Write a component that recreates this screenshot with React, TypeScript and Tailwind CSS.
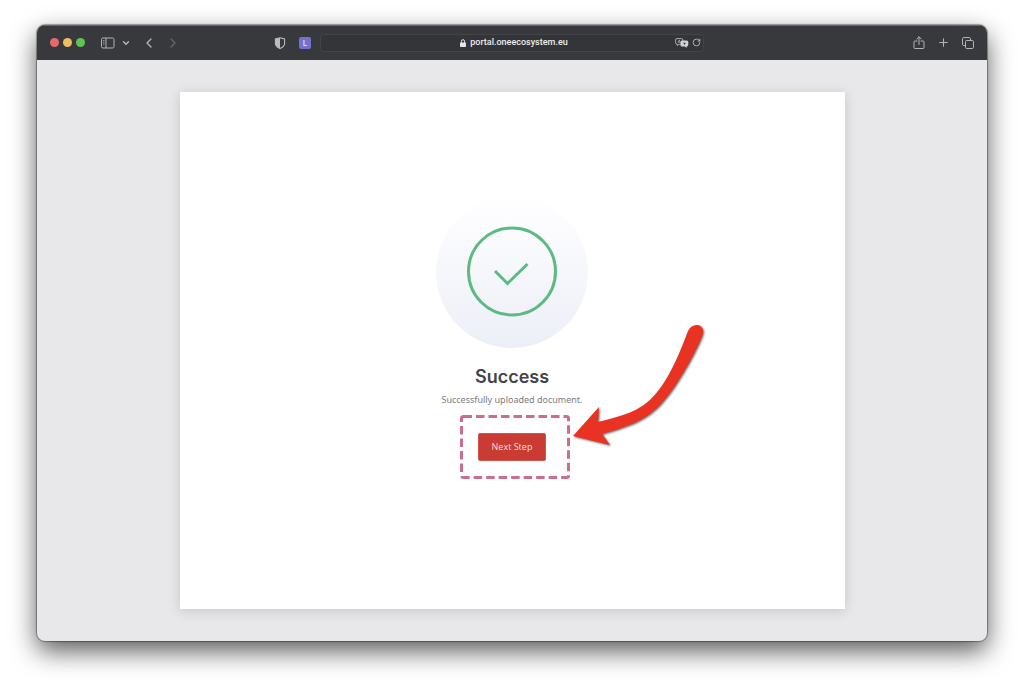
import { ChevronDown, ChevronLeft, ChevronRight, Plus, RotateCw } from "lucide-react";

const iconButton = "flex items-center justify-center text-[#b4b4b7]";

function SidebarIcon() {
  return (
    <svg viewBox="0 0 14 12" className="h-3 w-3.5" fill="none" stroke="currentColor">
      <rect x="0.5" y="1" width="12.5" height="10" rx="1.5" />
      <path d="M5 1v10" />
      <path d="M2 3.5h1.5M2 5.3h1.5M2 7.1h1.5" strokeWidth="0.8" />
    </svg>
  );
}

function ShieldIcon() {
  return (
    <svg viewBox="0 0 12 12" className="size-3">
      <path d="M6 .7 10.6 2v4.2c0 2.4-2 4.2-4.6 5.2C3.4 10.4 1.4 8.6 1.4 6.2V2Z" fill="#38393c" stroke="#bcbcbe" strokeWidth="1.1" />
      <path d="M6 .7 1.4 2v4.2c0 2.4 2 4.2 4.6 5.2Z" fill="#bcbcbe" />
    </svg>
  );
}

function LockIcon() {
  return (
    <svg viewBox="0 0 6 8" className="h-2 w-1.5">
      <path d="M1.4 4V2.3a1.6 1.6 0 0 1 3.2 0V4" fill="none" stroke="#e6e6e7" />
      <rect y="3.5" width="6" height="4.5" rx="0.8" fill="#e6e6e7" />
    </svg>
  );
}

function TranslateIcon() {
  return (
    <svg viewBox="0 0 14 10" className="h-2.5 w-3.5">
      <path
        d="M2 .6h4.5a1.4 1.4 0 0 1 1.4 1.4v2.8a1.4 1.4 0 0 1-1.4 1.4H4L2.3 7.7V6.200H2A1.4 1.4 0 0 1 .6 4.8V2A1.4 1.4 0 0 1 2 .6Z"
        fill="none"
        stroke="#b4b4b7"
        strokeWidth="0.9"
      />
      <path d="M3 4.8 4.2 2l1.2 2.8M3.4 4h1.6" fill="none" stroke="#b4b4b7" strokeWidth="0.7" />
      <path d="M7 2.6h4.6A1.7 1.7 0 0 1 13.3 4.3v2.4a1.7 1.7 0 0 1-1.7 1.7v1.5L9.9 8.400H7a1.5 1.5 0 0 1-1.5-1.5V4.3A1.7 1.7 0 0 1 7 2.6Z" fill="#d2d2d4" />
      <path d="M8.2 4.7h2.6l-1.3 2.4Z" fill="#38393c" />
    </svg>
  );
}

function ShareIcon() {
  return (
    <svg viewBox="0 0 12 14" className="h-3.5 w-3" fill="none" stroke="currentColor" strokeLinecap="round" strokeLinejoin="round">
      <path d="M4 5H2a1 1 0 0 0-1 1v5.500a1 1 0 0 0 1 1h8a1 1 0 0 0 1-1V6a1 1 0 0 0-1-1H8" />
      <path d="M6 8.500V1M3.800 3 6 .8 8.200 3" />
    </svg>
  );
}

function TabsIcon() {
  return (
    <svg viewBox="0 0 12 12" className="size-3" fill="none" stroke="currentColor">
      <path d="M3.5 8.500H1.7a1.2 1.2 0 0 1-1.2-1.2V1.7A1.2 1.2 0 0 1 1.7.5h5.600a1.2 1.2 0 0 1 1.2 1.2v1.8" />
      <rect x="3.5" y="3.5" width="8" height="8" rx="1.2" />
    </svg>
  );
}

function Toolbar() {
  return (
    <header className="flex h-[35px] items-center bg-[#38393c] px-[13px] shadow-[inset_0_1px_0_#65686a]">
      <div className="flex flex-1 items-center">
        <div className="flex gap-1">
          <button aria-label="Close" className="size-[9px] rounded-full bg-[#e8696b]" />
          <button aria-label="Minimize" className="size-[9px] rounded-full bg-[#f0bd5c]" />
          <button aria-label="Full screen" className="size-[9px] rounded-full bg-[#5fc454]" />
        </div>
        <button aria-label="Sidebar" className={`${iconButton} ml-4`}>
          <SidebarIcon />
        </button>
        <button aria-label="Tab groups" className={`${iconButton} ml-1.5`}>
          <ChevronDown className="size-2.5" strokeWidth={3.5} />
        </button>
        <button aria-label="Back" className={`${iconButton} ml-2.5`}>
          <ChevronLeft className="size-4" strokeWidth={2} />
        </button>
        <button aria-label="Forward" className="ml-2 text-[#66676a]">
          <ChevronRight className="size-4" strokeWidth={2} />
        </button>
        <div className="ml-auto flex items-center gap-[13px] pr-[9px]">
          <button aria-label="Privacy report">
            <ShieldIcon />
          </button>
          <button className="flex size-3 items-center justify-center rounded-xs bg-[#7471cc] font-['Inter'] text-[8px] font-medium text-[#e3e2fa]">
            L
          </button>
        </div>
      </div>

      <div className="flex h-[18px] w-96 items-center rounded-sm border border-[#434447] bg-[#343538] pr-0.5 pl-8">
        <div className="flex flex-1 items-center justify-center gap-1 font-['Roboto'] text-[9px] font-medium text-[#ececed]">
          <LockIcon />
          <span>portal.oneecosystem.eu</span>
        </div>
        <div className="flex items-center gap-[3px]">
          <button aria-label="Translate">
            <TranslateIcon />
          </button>
          <button aria-label="Reload" className={iconButton}>
            <RotateCw className="size-[9px]" strokeWidth={2.5} />
          </button>
        </div>
      </div>

      <div className="flex flex-1 items-center justify-end gap-3">
        <button aria-label="Share" className={iconButton}>
          <ShareIcon />
        </button>
        <button aria-label="New tab" className={iconButton}>
          <Plus className="size-[13px]" strokeWidth={2} />
        </button>
        <button aria-label="Tab overview" className={iconButton}>
          <TabsIcon />
        </button>
      </div>
    </header>
  );
}

function Arrow() {
  return (
    <svg
      viewBox="0 0 136 128"
      className="pointer-events-none absolute -top-[93px] left-full ml-2 h-32 w-[136px] drop-shadow-[1px_1px_1px_rgba(0,0,0,0.6)]"
    >
      <path
        d="M1 114 27 85 26 100C60 92 74 86 89 65C98 53 108 31 116 9C118 5 121 3 125 3C129 3 132 7 131 11C129 19 117 42 108 56C94 78 82 93 60 102C50 106 40 109 30 112L38 123Z"
        fill="#ea3223"
      />
    </svg>
  );
}

export default function App() {
  return (
    <div className="flex min-h-screen flex-col bg-white px-[37px] pt-[25px] pb-[49px]">
      <div className="flex flex-1 flex-col overflow-hidden rounded-lg bg-[#e8e7ea] shadow-[0_0_1px_1px_rgba(0,0,0,0.35),0_10px_26px_rgba(0,0,0,0.65)]">
        <Toolbar />
        <main className="flex flex-1 justify-center py-8">
          <section className="flex w-[70%] flex-col items-center bg-white pt-[104px] shadow-[0_2px_12px_rgba(0,0,0,0.15)]">
            <div className="flex size-[152px] items-center justify-center rounded-full bg-linear-to-b from-white to-[#edeff8]">
              <svg viewBox="0 0 92 92" className="size-[92px]" fill="none" stroke="#5dba82" strokeWidth="3">
                <circle cx="46" cy="45.5" r="43.5" />
                <path d="M29 45 41.5 57.5 61.5 38" />
              </svg>
            </div>
            <h1 className="mt-4 font-['Inter'] text-[18px] leading-[26px] font-semibold text-[#444448]">Success</h1>
            <p className="mt-0.5 font-['Noto_Sans'] text-[9px] leading-4 text-[#7b7b80]">Successfully uploaded document.</p>
            <div className="relative mt-[7px] flex p-[18px]">
              <svg viewBox="0 0 110 64" className="absolute top-0 left-0 h-16 w-[110px]" fill="none" stroke="#cc6d8c" strokeWidth="3">
                <rect x="1.5" y="1.5" width="107" height="61" rx="2" strokeDasharray="8.5 4" />
              </svg>
              <button className="relative h-7 w-[68px] rounded-xs border border-[#d5554c] bg-[#c93b33] font-['Open_Sans'] text-[9px] whitespace-nowrap text-[#f7dedc]">
                Next Step
              </button>
              <Arrow />
            </div>
          </section>
        </main>
      </div>
    </div>
  );
}
